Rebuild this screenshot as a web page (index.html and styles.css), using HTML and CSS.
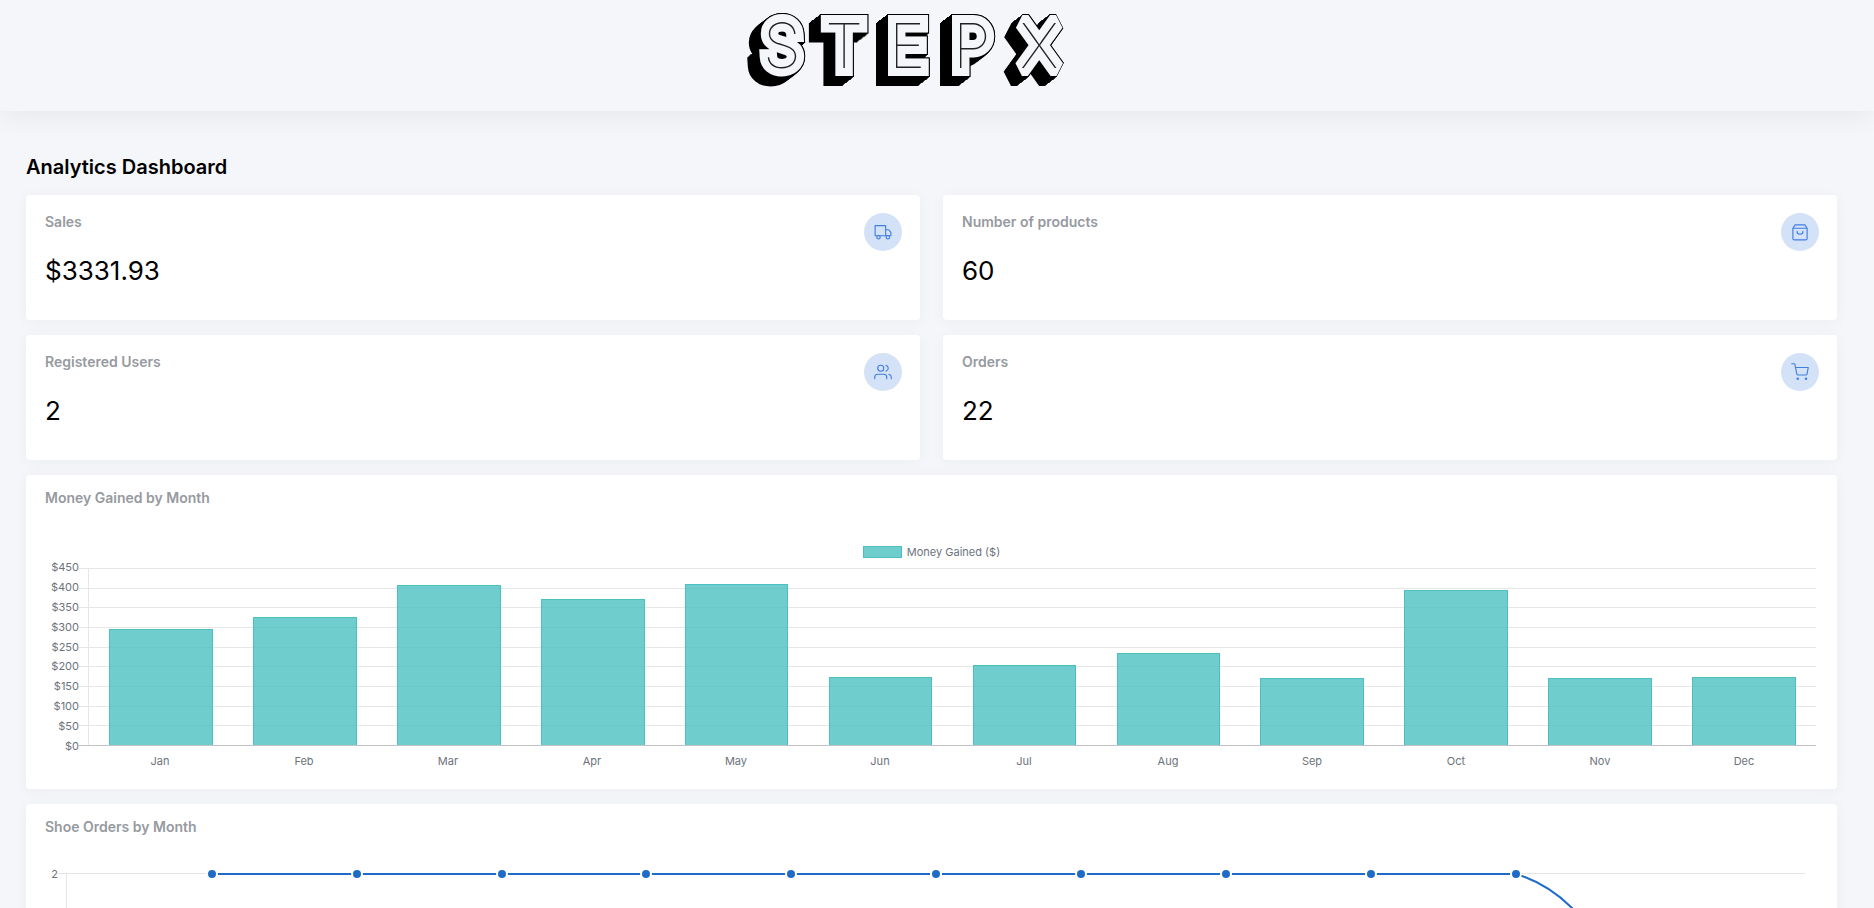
FILE: index.html
```html
<!DOCTYPE html>
<html lang="en">
<head>
<meta charset="utf-8">
<title>StepX Analytics Dashboard</title>
<link rel="stylesheet" href="styles.css">
</head>
<body>
<header class="topbar">
  <svg class="logo" width="320" height="84" viewBox="0 0 320 84" role="img" aria-label="StepX">
    <defs>
      <text id="word" class="logo-word" y="62" x="17 79 143 207 274">STEPX</text>
      <g id="slab2"><use href="#word"/><use href="#word" x="-1" y="1"/></g>
      <g id="slab4"><use href="#slab2"/><use href="#slab2" x="-2" y="2"/></g>
    </defs>
    <g class="logo-shade">
      <use href="#slab4"/><use href="#slab4" x="-4" y="3"/><use href="#slab4" x="-8" y="6"/>
    </g>
    <use class="logo-edge" href="#word"/>
    <use class="logo-face" href="#word"/>
    <use class="logo-inline" href="#word"/>
  </svg>
</header>
<main class="dashboard">
  <h1 class="page-title">Analytics Dashboard</h1>
  <section class="stats">
    <article class="card stat">
      <div><h2 class="label">Sales</h2><p class="value">$3331.93</p></div>
      <span class="badge"><svg class="icon" viewBox="0 0 24 24"><path d="M1.500 3.500h14v13.500h-14zM15.500 9h4l3 3.500v4.500h-7"/><circle cx="6" cy="19" r="2.300"/><circle cx="18.500" cy="19" r="2.300"/></svg></span>
    </article>
    <article class="card stat">
      <div><h2 class="label">Number of products</h2><p class="value">60</p></div>
      <span class="badge"><svg class="icon" viewBox="0 0 24 24"><path d="M5.500 2.500h13l3 4.500v13.500a2 2 0 0 1-2 2h-15a2 2 0 0 1-2-2V7zM2.500 7h19M16 11a4 4 0 0 1-8 0"/></svg></span>
    </article>
    <article class="card stat">
      <div><h2 class="label">Registered Users</h2><p class="value">2</p></div>
      <span class="badge"><svg class="icon" viewBox="0 0 24 24"><path d="M17 21v-2a4 4 0 0 0-4-4H5a4 4 0 0 0-4 4v2M23 21v-2a4 4 0 0 0-3-3.870M16 3.130a4 4 0 0 1 0 7.750"/><circle cx="9" cy="7" r="4"/></svg></span>
    </article>
    <article class="card stat">
      <div><h2 class="label">Orders</h2><p class="value">22</p></div>
      <span class="badge"><svg class="icon" viewBox="0 0 24 24"><path d="M1 1h4l2.700 13.400a2 2 0 0 0 2 1.600h9.700a2 2 0 0 0 2-1.600L23 6H6"/><circle cx="9" cy="21" r="1"/><circle cx="20" cy="21" r="1"/></svg></span>
    </article>
  </section>
  <section class="card chart-card money">
    <h2 class="label">Money Gained by Month</h2>
    <div class="legend"><span class="swatch"></span>Money Gained ($)</div>
    <div class="chart">
      <div class="y-axis"><span>$450</span><span>$400</span><span>$350</span><span>$300</span><span>$250</span><span>$200</span><span>$150</span><span>$100</span><span>$50</span><span>$0</span></div>
      <div class="plot">
        <div class="grid"><i></i><i></i><i></i><i></i><i></i><i></i><i></i><i></i><i></i></div>
        <div class="bars">
          <span class="bar" style="height:65.8%"></span>
          <span class="bar" style="height:72.6%"></span>
          <span class="bar" style="height:90.5%"></span>
          <span class="bar" style="height:82.7%"></span>
          <span class="bar" style="height:91.1%"></span>
          <span class="bar" style="height:38.6%"></span>
          <span class="bar" style="height:45.4%"></span>
          <span class="bar" style="height:52.2%"></span>
          <span class="bar" style="height:38.1%"></span>
          <span class="bar" style="height:87.6%"></span>
          <span class="bar" style="height:37.8%"></span>
          <span class="bar" style="height:38.6%"></span>
        </div>
      </div>
      <div class="x-axis"><span>Jan</span><span>Feb</span><span>Mar</span><span>Apr</span><span>May</span><span>Jun</span><span>Jul</span><span>Aug</span><span>Sep</span><span>Oct</span><span>Nov</span><span>Dec</span></div>
    </div>
  </section>
  <section class="card chart-card">
    <h2 class="label">Shoe Orders by Month</h2>
    <svg class="line-chart" viewBox="0 0 1773 80" role="img" aria-label="Shoe orders by month">
      <path class="rule" d="M13 20.500H1760M21.500 20V80"/>
      <text class="tick" x="13" y="25" text-anchor="end">2</text>
      <path class="series" d="M167 21H1471C1491 27 1511 39 1527 55C1537 65 1546 74 1551 80"/>
      <g class="points">
        <circle cx="167" cy="21" r="5"/><circle cx="312" cy="21" r="5"/><circle cx="457" cy="21" r="5"/><circle cx="601" cy="21" r="5"/><circle cx="746" cy="21" r="5"/><circle cx="891" cy="21" r="5"/><circle cx="1036" cy="21" r="5"/><circle cx="1181" cy="21" r="5"/><circle cx="1326" cy="21" r="5"/><circle cx="1471" cy="21" r="5"/>
      </g>
    </svg>
  </section>
</main>
</body>
</html>
```
FILE: styles.css
```css
* { box-sizing: border-box; }
body {
  margin: 0;
  height: 100vh;
  overflow: hidden;
  background: #f5f6fa;
  color: #000;
  font-family: Inter, "Liberation Sans", sans-serif;
}
h1, h2, p { margin: 0; }

.topbar {
  display: flex;
  justify-content: center;
  height: 111px;
  padding: 6px 62px 0 0;
  box-shadow: 0 6px 26px rgba(0, 0, 0, .06);
}
.logo { overflow: visible; }
.logo-word { font-family: Inter, sans-serif; font-size: 62px; font-weight: 100; }
.logo-shade, .logo-edge { fill: #000; stroke: #000; stroke-width: 18px; stroke-linejoin: miter; stroke-miterlimit: 2; }
.logo-face { fill: #f5f6fa; stroke: #f5f6fa; stroke-width: 16px; stroke-linejoin: miter; stroke-miterlimit: 2; }
.logo-inline { fill: #222; }

.dashboard { padding: 44px 37px 0 26px; }
.page-title { font-size: 20px; line-height: 24px; font-weight: 600; margin-bottom: 16px; }
.card {
  background: #fff;
  border-radius: 4px;
  box-shadow: 0 2px 16px rgba(0, 0, 0, .04);
}
.label { font-size: 14px; line-height: 18px; font-weight: 600; color: #969a9f; }

.stats { display: grid; grid-template-columns: 1fr 1fr; gap: 15px 23px; }
.stat { display: flex; justify-content: space-between; height: 125px; padding: 18px 18px 0 19px; }
.value { margin-top: 22px; font-size: 26px; line-height: 36px; }
.badge {
  display: flex;
  align-items: center;
  justify-content: center;
  width: 38px;
  height: 38px;
  border-radius: 50%;
  background: #d4e2f7;
}
.icon { width: 18px; height: 18px; fill: none; stroke: #3f7ee0; stroke-width: 1.5px; stroke-linejoin: round; stroke-linecap: round; overflow: visible; }

.chart-card { margin-top: 15px; padding: 14px 19px 0; }
.money { padding-bottom: 19px; }
.legend {
  display: flex;
  justify-content: center;
  align-items: center;
  gap: 5px;
  margin-top: 36px;
  font-size: 11px;
  line-height: 18px;
  color: #6c737b;
}
.swatch { width: 39px; height: 12px; background: rgba(75, 192, 192, .8); border: 1px solid #4bc0c0; }

.chart { display: grid; grid-template-columns: 34px 1fr; padding: 7px 2px 0 0; }
.y-axis {
  display: flex;
  flex-direction: column;
  justify-content: space-between;
  margin: -9px 0 -8px;
  text-align: right;
  font-size: 11px;
  line-height: 16px;
  color: #6c737b;
}
.plot { display: grid; grid-template-columns: 9px 1fr; height: 178px; border-bottom: 1px solid #c2c2c2; }
.grid { grid-area: 1 / 1 / 2 / 3; display: flex; flex-direction: column; }
.grid i { flex: 1; border-top: 1px solid #e6e6e6; }
.bars {
  grid-area: 1 / 2;
  display: grid;
  grid-template-columns: repeat(12, 1fr);
  align-items: end;
  justify-items: center;
  border-left: 1px solid #e6e6e6;
}
.bar { width: 72%; background: rgba(75, 192, 192, .8); border: 1px solid #4bc0c0; border-bottom: 0; }
.x-axis {
  grid-column: 2;
  display: grid;
  grid-template-columns: repeat(12, 1fr);
  margin: 6px 0 0 9px;
  text-align: center;
  font-size: 11px;
  line-height: 18px;
  color: #6c737b;
}

.line-chart { display: block; width: 100%; margin-top: 17px; }
.rule { fill: none; stroke: #e6e6e6; }
.tick { font-size: 11px; fill: #6c737b; }
.series { fill: none; stroke: #1f6bc8; stroke-width: 2px; }
.points { fill: #1f6bc8; stroke: #fff; stroke-width: 2px; }
```
